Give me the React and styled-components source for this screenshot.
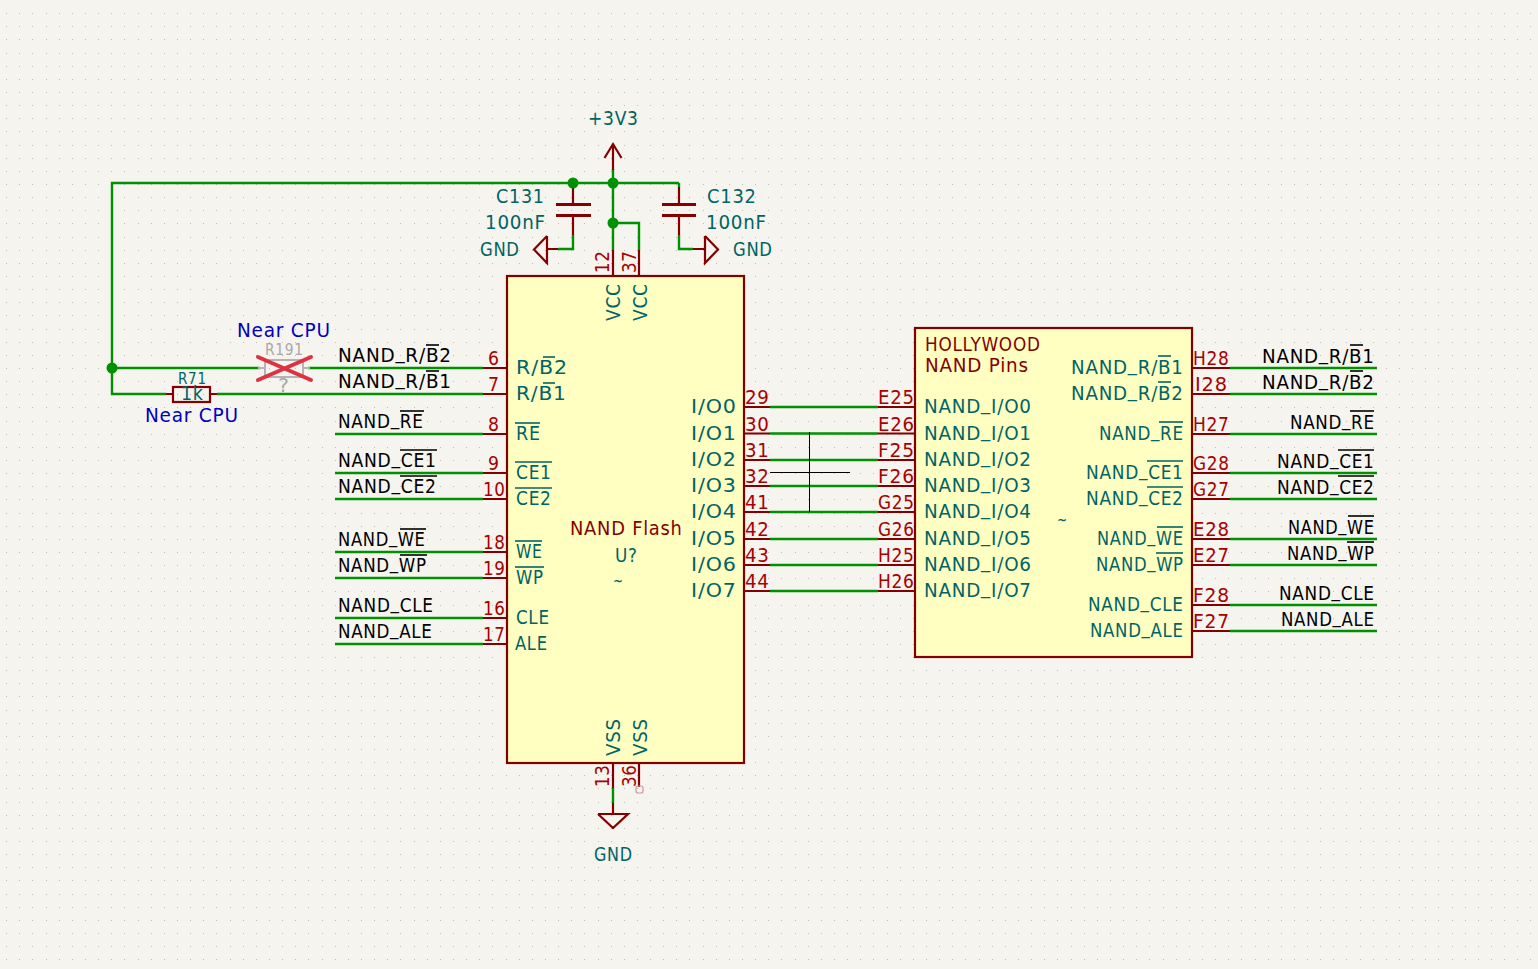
import styled, { createGlobalStyle } from 'styled-components';

const GlobalStyle = createGlobalStyle`
  html, body {
    margin: 0;
    padding: 0;
    background: #f5f4ef;
  }
`;

const FONT = '"DejaVu Sans", "Liberation Sans", sans-serif';
const TRACKING = 0.8;

const Sheet = styled.svg`
  display: block;
  width: 1538px;
  height: 969px;
  background: #f5f4ef;
  font-family: ${FONT};
`;

const GridDots = styled.path`
  fill: #bdbdb8;
`;

const Wire = styled.path`
  fill: none;
  stroke: #009000;
  stroke-width: 2.4;
`;

const Junction = styled.circle`
  fill: #009000;
`;

const PinLine = styled.path`
  fill: none;
  stroke: #840000;
  stroke-width: 2.2;
`;

const PartBody = styled.rect`
  fill: none;
  stroke: #840000;
  stroke-width: 2.2;
`;

const Plate = styled.path`
  fill: none;
  stroke: #840000;
  stroke-width: 3;
`;

const ChipBody = styled.rect`
  fill: #ffffc2;
  stroke: #840000;
  stroke-width: 2.2;
`;

const Overbar = styled.path`
  fill: none;
  stroke: ${(p) => p.$color};
  stroke-width: 1.6;
`;

const Txt = styled.text`
  fill: ${(p) => p.$color};
  font-size: ${(p) => p.$size}px;
  letter-spacing: ${TRACKING}px;
`;

const Cursor = styled.path`
  fill: none;
  stroke: #000;
  stroke-width: 1;
`;

const GhostPart = styled.path`
  fill: none;
  stroke: #b4b4b4;
  stroke-width: 2;
`;

const DnpCross = styled.path`
  fill: none;
  stroke: #dd3340;
  stroke-width: 4;
  stroke-linecap: round;
`;

const NoConnect = styled.rect`
  fill: none;
  stroke: #c89a9a;
  stroke-width: 1.2;
`;

const BLACK = '#000000';
const TEAL = '#006464';
const RED = '#a90000';
const DARK = '#840000';
const BLUE = '#0000c2';
const GRAY = '#a8a8a8';

const gridPath = () => {
  let d = '';
  for (let i = 0; i < 118; i++) {
    for (let j = 0; j < 74; j++) {
      const x = Math.round(6.2 + 13.14 * i);
      const y = Math.round(13.2 + 13.14 * j);
      d += `M${x} ${y}h1v1h-1z`;
    }
  }
  return d;
};

const measure = document.createElement('canvas').getContext('2d');

// horizontal stretch that makes a text span the wanted width
const fit = (t, size, width) => {
  measure.font = `${size}px ${FONT}`;
  return (width / (measure.measureText(t).width + TRACKING * (t.length - 1))).toFixed(3);
};

// lifts the underscore so it sits on the baseline and clears the wire below
const withRaisedUnderscore = (t) => {
  const at = t.indexOf('_');
  if (at < 0) return t;
  return (
    <>
      {t.slice(0, at)}
      <tspan dy={-3}>_</tspan>
      <tspan dy={3}>{t.slice(at + 1)}</tspan>
    </>
  );
};

// text fitted between two x positions
const T = ({ t, a, b, y, c, s = 19.5 }) => (
  <Txt transform={`translate(${a} ${y}) scale(${fit(t, s, b - a)} 1)`} $color={c} $size={s}>
    {withRaisedUnderscore(t)}
  </Txt>
);

// text running upwards, a is the bottom and b the top
const V = ({ t, x, a, b, c, s = 19.5 }) => (
  <Txt transform={`translate(${x} ${a}) rotate(-90) scale(${fit(t, s, a - b)} 1)`} $color={c} $size={s}>
    {t}
  </Txt>
);

const leftNets = [
  ['NAND_R/B2', 451, 368, [426, 439]],
  ['NAND_R/B1', 451, 394, [426, 439]],
  ['NAND_RE', 423, 434, [400, 424]],
  ['NAND_CE1', 436, 473, [400, 437]],
  ['NAND_CE2', 436, 499, [400, 437]],
  ['NAND_WE', 425, 552, [400, 426]],
  ['NAND_WP', 426, 578, [400, 427]],
  ['NAND_CLE', 433, 618],
  ['NAND_ALE', 432, 644],
];

const leftPinNames = [
  ['R/B2', 516, 567, 368, [543, 555]],
  ['R/B1', 516, 566, 394, [543, 555]],
  ['RE', 516, 540, 434, [515, 540]],
  ['CE1', 516, 551, 473, [515, 552]],
  ['CE2', 516, 551, 499, [515, 552]],
  ['WE', 516, 542, 552, [515, 542]],
  ['WP', 516, 543, 578, [515, 544]],
  ['CLE', 516, 549, 618],
  ['ALE', 515, 547, 644],
];

const leftPinNums = [
  ['6', 488, 499, 368],
  ['7', 488, 499, 394],
  ['8', 488, 499, 434],
  ['9', 488, 499, 473],
  ['10', 483, 505, 499],
  ['18', 483, 505, 552],
  ['19', 483, 505, 578],
  ['16', 483, 505, 618],
  ['17', 483, 505, 644],
];

const busRows = [
  [407, '29', 'E25', 0],
  [433.5, '30', 'E26', 1],
  [460, '31', 'F25', 2],
  [486, '32', 'F26', 3],
  [512, '41', 'G25', 4],
  [539, '42', 'G26', 5],
  [565, '43', 'H25', 6],
  [591, '44', 'H26', 7],
];

const rightNets = [
  ['NAND_R/B1', 'H28', 368, 1262, 1071, [1350, 1363], [1158, 1171]],
  ['NAND_R/B2', 'I28', 394, 1262, 1071, [1350, 1363], [1158, 1171]],
  ['NAND_RE', 'H27', 434, 1290, 1099, [1350, 1374], [1159, 1183]],
  ['NAND_CE1', 'G28', 473, 1277, 1086, [1338, 1374], [1147, 1183]],
  ['NAND_CE2', 'G27', 499, 1277, 1086, [1338, 1374], [1147, 1183]],
  ['NAND_WE', 'E28', 539, 1288, 1097, [1348, 1374], [1157, 1183]],
  ['NAND_WP', 'E27', 565, 1287, 1096, [1347, 1374], [1156, 1183]],
  ['NAND_CLE', 'F28', 605, 1279, 1088],
  ['NAND_ALE', 'F27', 631, 1281, 1090],
];

const wires = [
  'M112 368V183H679',
  'M112 368H260M308 368H483',
  'M112 368V394H166M217 394H483',
  'M335 434H483M335 473H483M335 499H483M335 552H483M335 578H483M335 618H483M335 644H483',
  'M613 183V169',
  'M613 183V250M613 223H639V250',
  'M573 183V187M573 235V249H558',
  'M679 183V187M679 235V249H693',
  'M613 788V803',
];

const pinLines = [
  'M483 368H507M483 394H507M483 434H507M483 473H507M483 499H507M483 552H507M483 578H507M483 618H507M483 644H507',
  'M613 170V144M604.5 158L613 144L621.5 158',
  'M573 187V204M573 216V235M558 249H547M547 236V263L534 249.5L547 236',
  'M679 187V204M679 216V235M693 249H705M705 236V263L718 249.5L705 236',
  'M613 250V276M639 250V276',
  'M613 763V788M639 763V787M613 803V814M598 814H628L613 828L598 814',
  'M166 394H173M210 394H217',
];

export default function App() {
  return (
    <>
      <GlobalStyle />
      <Sheet viewBox="0 0 1538 969">
        <GridDots d={gridPath()} />

        <Wire d={wires.join('')} />
        {busRows.map(([y]) => (
          <Wire key={y} d={`M770 ${y}H878`} />
        ))}
        {rightNets.map(([, , y]) => (
          <Wire key={y} d={`M1230 ${y}H1377`} />
        ))}

        <ChipBody x={507} y={276} width={237} height={487} />
        <ChipBody x={915} y={328} width={277} height={329} />

        <PinLine d={pinLines.join('')} />
        {busRows.map(([y]) => (
          <PinLine key={y} d={`M744 ${y}H770M878 ${y}H915`} />
        ))}
        {rightNets.map(([, , y]) => (
          <PinLine key={y} d={`M1192 ${y}H1230`} />
        ))}
        <Plate d="M556 204.5H591M556 215.5H591M662 204.5H696M662 215.5H696" />
        <PartBody x={173} y={387} width={37} height={15} />
        <NoConnect x={636} y={786} width={7} height={7} rx={2} />

        <Junction cx={112} cy={368} r={5.5} />
        <Junction cx={573} cy={183} r={5.5} />
        <Junction cx={613} cy={183} r={5.5} />
        <Junction cx={613} cy={223} r={5.5} />

        <Cursor d="M809.5 432V512M770 472.5H850" />

        {/* supply and passive labels */}
        <T t="+3V3" a={588} b={638} y={125} c={TEAL} />
        <T t="C131" a={496} b={544} y={203} c={TEAL} />
        <T t="100nF" a={485} b={545} y={229} c={TEAL} />
        <T t="GND" a={480} b={519} y={256} c={TEAL} />
        <T t="C132" a={707} b={756} y={203} c={TEAL} />
        <T t="100nF" a={706} b={766} y={229} c={TEAL} />
        <T t="GND" a={733} b={772} y={256} c={TEAL} />
        <T t="GND" a={594} b={632} y={861} c={TEAL} />

        {/* nets on the left */}
        {leftNets.map(([t, b, y, bar]) => (
          <g key={t}>
            <T t={t} a={338} b={b} y={y - 6} c={BLACK} />
            {bar && <Overbar $color={BLACK} d={`M${bar[0]} ${y - 23}H${bar[1]}`} />}
          </g>
        ))}
        {leftPinNames.map(([t, a, b, y, bar]) => (
          <g key={t}>
            <T t={t} a={a} b={b} y={y + 6} c={TEAL} />
            {bar && <Overbar $color={TEAL} d={`M${bar[0]} ${y - 11}H${bar[1]}`} />}
          </g>
        ))}
        {leftPinNums.map(([t, a, b, y]) => (
          <T key={t} t={t} a={a} b={b} y={y - 3} c={RED} />
        ))}

        {/* data bus between both chips */}
        {busRows.map(([y, num, ball, i]) => (
          <g key={num}>
            <T t={`I/O${i}`} a={691} b={736} y={y + 6} c={TEAL} />
            <T t={num} a={745} b={769} y={y - 3} c={RED} />
            <T t={ball} a={878} b={914} y={y - 3} c={RED} />
            <T t={`NAND_I/O${i}`} a={924} b={1031} y={y + 6} c={TEAL} />
          </g>
        ))}

        {/* nets on the right */}
        {rightNets.map(([t, ball, y, outer, inner, outerBar, innerBar]) => (
          <g key={t}>
            <T t={t} a={outer} b={1374} y={y - 5} c={BLACK} />
            <T t={t} a={inner} b={1183} y={y + 6} c={TEAL} />
            <T t={ball} a={ball[0] === 'I' ? 1195 : 1193} b={ball[0] === 'I' ? 1227 : 1229} y={y - 3} c={RED} />
            {outerBar && <Overbar $color={BLACK} d={`M${outerBar[0]} ${y - 23}H${outerBar[1]}`} />}
            {innerBar && <Overbar $color={TEAL} d={`M${innerBar[0]} ${y - 12}H${innerBar[1]}`} />}
          </g>
        ))}

        {/* chip titles */}
        <T t="HOLLYWOOD" a={925} b={1040} y={351} c={DARK} />
        <T t="NAND Pins" a={925} b={1028} y={372} c={DARK} />
        <T t="~" a={1057} b={1067} y={526} c={TEAL} s={18} />
        <T t="NAND Flash" a={570} b={682} y={535} c={DARK} />
        <T t="U?" a={615} b={637} y={562} c={TEAL} />
        <T t="~" a={613} b={623} y={587} c={TEAL} s={18} />

        {/* rotated power pins */}
        <V t="12" x={609} a={273} b={251} c={RED} />
        <V t="37" x={636} a={273} b={251} c={RED} />
        <V t="VCC" x={620} a={321} b={284} c={TEAL} />
        <V t="VCC" x={647} a={321} b={284} c={TEAL} />
        <V t="VSS" x={620} a={756} b={719} c={TEAL} />
        <V t="VSS" x={647} a={756} b={719} c={TEAL} />
        <V t="13" x={609} a={787} b={765} c={RED} />
        <V t="36" x={636} a={787} b={765} c={RED} />

        {/* series resistors */}
        <T t="R71" a={178} b={206} y={384} c={TEAL} s={16} />
        <T t="1k" a={181} b={203} y={400} c={TEAL} />
        <T t="Near CPU" a={145} b={238} y={422} c={BLUE} />
        <T t="Near CPU" a={237} b={330} y={337} c={BLUE} />
        <GhostPart d="M265 360H303V377H265ZM258 368H265M303 368H310" />
        <T t="R191" a={265} b={303} y={355} c={GRAY} s={16} />
        <T t="?" a={278} b={289} y={392} c={GRAY} />
        <DnpCross d="M258 357L311 380M311 357L258 380" />
      </Sheet>
    </>
  );
}
